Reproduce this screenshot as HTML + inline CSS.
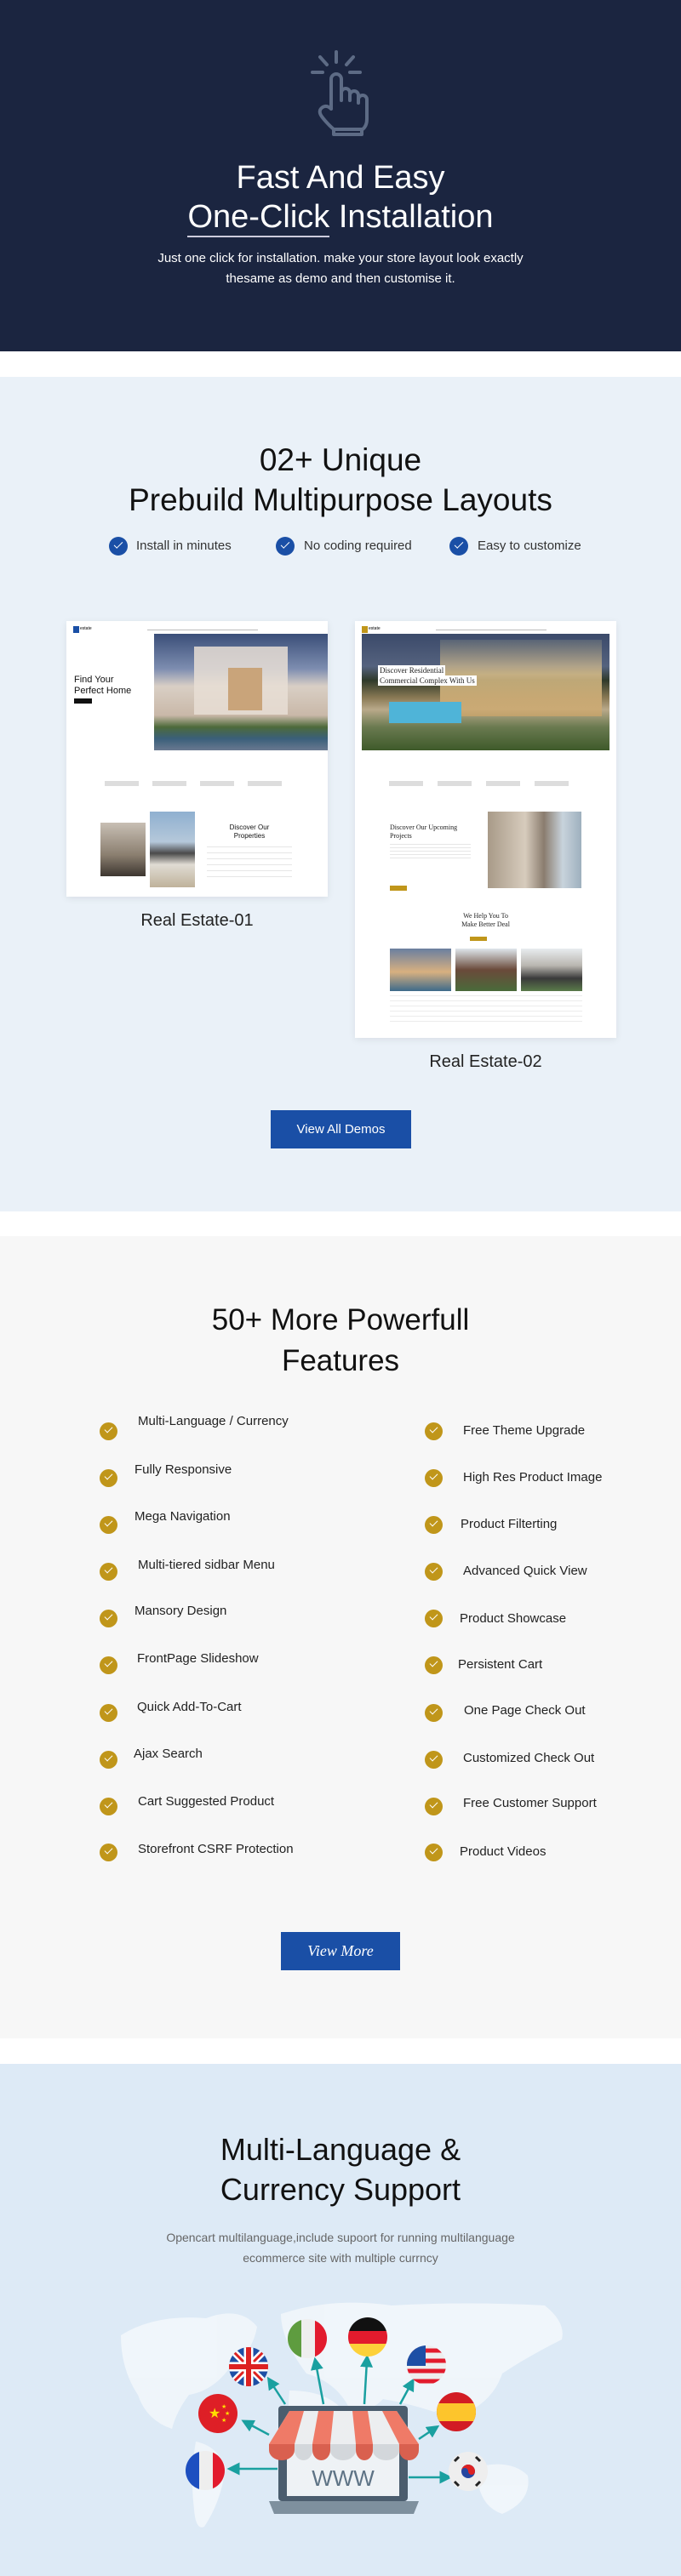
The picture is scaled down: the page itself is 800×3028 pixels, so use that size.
<!DOCTYPE html>
<html><head><meta charset="utf-8">
<style>
*{margin:0;padding:0;box-sizing:border-box}
body{width:800px;height:3028px;position:relative;background:#fff;font-family:"Liberation Sans",Arial,sans-serif;overflow:hidden}
.a{position:absolute}
.c{text-align:center;width:800px;left:0}
.h{color:#111;font-size:37px;line-height:47px}
.chk{position:absolute;width:21px;height:21px;border-radius:50%;background:#c0961a}
.chk:after{content:"";position:absolute;left:6px;top:5px;width:8px;height:4px;border-left:1.6px solid #fff;border-bottom:1.6px solid #fff;transform:rotate(-45deg)}
.bc{position:absolute;width:22px;height:22px;border-radius:50%;background:#1a4fa6}
.bc:after{content:"";position:absolute;left:6px;top:6px;width:9px;height:4px;border-left:1.6px solid #fff;border-bottom:1.6px solid #fff;transform:rotate(-45deg)}
.ft{position:absolute;font-size:15px;color:#222}
.card{position:absolute;background:#fff;box-shadow:0 2px 8px rgba(0,0,0,.08)}
.line{position:absolute;height:2px;background:#ccc}
</style></head><body>

<!-- Section 1 -->
<div class="a" style="left:0;top:0;width:800px;height:413px;background:#1b2540"></div>
<svg class="a" style="left:0;top:0" width="800" height="200">
<g stroke="#5d6b85" stroke-width="4" fill="none" stroke-linecap="round" stroke-linejoin="round">
<line x1="395" y1="61" x2="395" y2="73"/><line x1="376" y1="67" x2="384" y2="76"/><line x1="415" y1="67" x2="407" y2="76"/>
<line x1="367" y1="85" x2="379" y2="85"/><line x1="411" y1="85" x2="423" y2="85"/>
<path d="M389,128 V93 a6,6 0 0 1 12,0 V118 V109 a5,5 0 0 1 10,0 V118 V112 a5,5 0 0 1 10,0 V121 V117 a5,5 0 0 1 10,0 V140 q0,8 -5,12 H392 q-8,-7 -14,-15 q-5,-7 1,-11 q5,-3 10,2"/>
<path d="M392,152 V158 H425 V152"/>
</g></svg>
<div class="a c" style="top:186px;color:#fff;font-size:38px;line-height:46px">Fast And Easy<br><span style="display:inline-block;border-bottom:2px solid #ccd;line-height:40px;padding-bottom:2px">One-Click</span> Installation</div>
<div class="a c" style="top:292px;color:#fff;font-size:15px;line-height:24px">Just one click for installation. make your store layout look exactly<br>thesame as demo and then customise it.</div>

<!-- Section 2 -->
<div class="a" style="left:0;top:443px;width:800px;height:981px;background:#eaf1f8"></div>
<div class="a c h" style="top:517px">02+ Unique<br>Prebuild Multipurpose Layouts</div>
<div class="bc" style="left:128px;top:631px"></div><div class="a" style="left:160px;top:633px;font-size:15px;color:#333">Install in minutes</div>
<div class="bc" style="left:324px;top:631px"></div><div class="a" style="left:357px;top:633px;font-size:15px;color:#333">No coding required</div>
<div class="bc" style="left:528px;top:631px"></div><div class="a" style="left:561px;top:633px;font-size:15px;color:#333">Easy to customize</div>

<!-- card 1 -->
<div class="card" style="left:78px;top:730px;width:307px;height:324px">
 <div class="a" style="left:8px;top:6px;width:7px;height:8px;background:#1a4fa6"></div>
 <div class="a" style="left:16px;top:6px;font-size:5px">estate</div>
 <div class="line" style="left:95px;top:10px;width:130px;height:1px;background:#bbb"></div>
 <div class="a" style="left:103px;top:15px;width:204px;height:137px;background:linear-gradient(180deg,#3a4e78 0%,#7d8db0 30%,#d9cfc5 45%,#c9b8a8 70%,#4d6a3a 80%,#3a5f7a 90%,#6a7990 100%)"></div>
 <div class="a" style="left:150px;top:30px;width:110px;height:80px;background:#e8ded5;opacity:.85"></div>
 <div class="a" style="left:190px;top:55px;width:40px;height:50px;background:#c9a47a"></div>
 <div class="a" style="left:9px;top:63px;font-size:11px;line-height:13px;color:#111">Find Your<br>Perfect Home</div>
 <div class="a" style="left:9px;top:91px;width:21px;height:6px;background:#111"></div>
 <div class="line" style="left:45px;top:188px;width:220px;height:6px;background:repeating-linear-gradient(90deg,#ddd 0 40px,transparent 40px 56px)"></div>
 <div class="a" style="left:40px;top:237px;width:53px;height:63px;background:linear-gradient(180deg,#c8bfb4,#8b7f70 60%,#3d3630)"></div>
 <div class="a" style="left:98px;top:224px;width:53px;height:89px;background:linear-gradient(180deg,#8fb0d0 0%,#b5c8da 40%,#4a4a4a 55%,#e0dcd4 70%,#bfb29a 100%)"></div>
 <div class="a" style="left:170px;top:238px;width:90px;text-align:center;font-size:8px;line-height:10px;color:#111">Discover Our<br>Properties</div>
 <div class="line" style="left:165px;top:265px;width:100px;height:40px;background:repeating-linear-gradient(180deg,#e6e6e6 0 1px,transparent 1px 7px)"></div>
</div>
<div class="a" style="left:78px;top:1071px;width:307px;text-align:center;font-size:20px;color:#222">Real Estate-01</div>

<!-- card 2 -->
<div class="card" style="left:417px;top:730px;width:307px;height:490px">
 <div class="a" style="left:8px;top:6px;width:7px;height:8px;background:#c0961a"></div>
 <div class="a" style="left:16px;top:6px;font-size:5px">estate</div>
 <div class="line" style="left:95px;top:10px;width:130px;height:1px;background:#bbb"></div>
 <div class="a" style="left:8px;top:15px;width:291px;height:137px;background:linear-gradient(180deg,#3b4a6a 0%,#55627e 28%,#2f3a2a 40%,#8a7a55 55%,#b9a98a 65%,#6a7a50 80%,#3e5a2a 100%)"></div>
 <div class="a" style="left:100px;top:22px;width:190px;height:90px;background:linear-gradient(180deg,#5f6a78,#e6c890 45%,#caa46a);opacity:.8"></div>
 <div class="a" style="left:40px;top:95px;width:85px;height:25px;background:#4fb4d8"></div>
 <div class="a" style="left:27px;top:52px;font-family:'Liberation Serif',serif;font-size:9px;line-height:12px;color:#222;background:#fff;padding:0 2px">Discover Residential</div>
 <div class="a" style="left:27px;top:64px;font-family:'Liberation Serif',serif;font-size:9px;line-height:12px;color:#222;background:#fff;padding:0 2px">Commercial Complex With Us</div>
 <div class="line" style="left:40px;top:188px;width:225px;height:6px;background:repeating-linear-gradient(90deg,#ddd 0 40px,transparent 40px 57px)"></div>
 <div class="a" style="left:41px;top:238px;font-family:'Liberation Serif',serif;font-size:8px;line-height:10px;color:#222">Discover Our Upcoming<br>Projects</div>
 <div class="line" style="left:41px;top:262px;width:95px;height:20px;background:repeating-linear-gradient(180deg,#e6e6e6 0 1px,transparent 1px 4px)"></div>
 <div class="a" style="left:41px;top:311px;width:20px;height:6px;background:#c0961a"></div>
 <div class="a" style="left:156px;top:224px;width:110px;height:90px;background:linear-gradient(90deg,#a89a88 0%,#d7ccbd 40%,#8a7c6e 60%,#c8d3dc 80%,#9eb0be)"></div>
 <div class="a" style="left:0;top:342px;width:307px;text-align:center;font-family:'Liberation Serif',serif;font-size:8px;line-height:10px;color:#222">We Help You To<br>Make Better Deal</div>
 <div class="a" style="left:135px;top:371px;width:20px;height:5px;background:#c0961a"></div>
 <div class="a" style="left:41px;top:385px;width:72px;height:50px;background:linear-gradient(180deg,#6a7fa0,#d8b080 55%,#3d6a8a)"></div>
 <div class="a" style="left:118px;top:385px;width:72px;height:50px;background:linear-gradient(180deg,#dfe6ec,#6a4a3a 50%,#4a6a3a)"></div>
 <div class="a" style="left:195px;top:385px;width:72px;height:50px;background:linear-gradient(180deg,#e8ecef,#b9b6b0 40%,#3a3a3a 70%,#5a7a4a)"></div>
 <div class="line" style="left:41px;top:440px;width:226px;height:35px;background:repeating-linear-gradient(180deg,#ececec 0 1px,transparent 1px 6px)"></div>
</div>
<div class="a" style="left:417px;top:1237px;width:307px;text-align:center;font-size:20px;color:#222">Real Estate-02</div>

<div class="a" style="left:318px;top:1305px;width:165px;height:45px;background:#1a4fa6;color:#fff;font-size:15px;line-height:45px;text-align:center">View All Demos</div>

<!-- Section 3 -->
<div class="a" style="left:0;top:1453px;width:800px;height:943px;background:#f7f7f7"></div>
<div class="a c" style="top:1528px;font-size:35px;line-height:48px;color:#111">50+ More Powerfull<br>Features</div>

<div class="chk" style="left:117px;top:1672px"></div><div class="ft" style="left:162px;top:1662px">Multi-Language / Currency</div>
<div class="chk" style="left:117px;top:1727px"></div><div class="ft" style="left:158px;top:1719px">Fully Responsive</div>
<div class="chk" style="left:117px;top:1782px"></div><div class="ft" style="left:158px;top:1774px">Mega Navigation</div>
<div class="chk" style="left:117px;top:1837px"></div><div class="ft" style="left:162px;top:1831px">Multi-tiered sidbar Menu</div>
<div class="chk" style="left:117px;top:1892px"></div><div class="ft" style="left:158px;top:1885px">Mansory Design</div>
<div class="chk" style="left:117px;top:1947px"></div><div class="ft" style="left:161px;top:1941px">FrontPage Slideshow</div>
<div class="chk" style="left:117px;top:2003px"></div><div class="ft" style="left:161px;top:1998px">Quick Add-To-Cart</div>
<div class="chk" style="left:117px;top:2058px"></div><div class="ft" style="left:157px;top:2053px">Ajax Search</div>
<div class="chk" style="left:117px;top:2113px"></div><div class="ft" style="left:162px;top:2109px">Cart Suggested Product</div>
<div class="chk" style="left:117px;top:2167px"></div><div class="ft" style="left:162px;top:2165px">Storefront CSRF Protection</div>

<div class="chk" style="left:499px;top:1672px"></div><div class="ft" style="left:544px;top:1673px">Free Theme Upgrade</div>
<div class="chk" style="left:499px;top:1727px"></div><div class="ft" style="left:544px;top:1728px">High Res Product Image</div>
<div class="chk" style="left:499px;top:1782px"></div><div class="ft" style="left:541px;top:1783px">Product Filterting</div>
<div class="chk" style="left:499px;top:1837px"></div><div class="ft" style="left:544px;top:1838px">Advanced Quick View</div>
<div class="chk" style="left:499px;top:1892px"></div><div class="ft" style="left:540px;top:1894px">Product Showcase</div>
<div class="chk" style="left:499px;top:1947px"></div><div class="ft" style="left:538px;top:1948px">Persistent Cart</div>
<div class="chk" style="left:499px;top:2003px"></div><div class="ft" style="left:545px;top:2002px">One Page Check Out</div>
<div class="chk" style="left:499px;top:2058px"></div><div class="ft" style="left:544px;top:2058px">Customized Check Out</div>
<div class="chk" style="left:499px;top:2113px"></div><div class="ft" style="left:544px;top:2111px">Free Customer Support</div>
<div class="chk" style="left:499px;top:2167px"></div><div class="ft" style="left:540px;top:2168px">Product Videos</div>

<div class="a" style="left:330px;top:2271px;width:140px;height:45px;background:#1a4fa6;color:#fff;font-family:'Liberation Serif',serif;font-style:italic;font-size:18px;line-height:45px;text-align:center">View More</div>

<!-- Section 4 -->
<div class="a" style="left:0;top:2426px;width:800px;height:602px;background:#ddeaf6"></div>
<div class="a c h" style="top:2503px;font-size:36px">Multi-Language &amp;<br>Currency Support</div>
<div class="a c" style="top:2618px;font-size:14px;line-height:24px;color:#666">Opencart multilanguage,include supoort for running multilanguage<br>ecommerce site with multiple currncy</div>

<svg class="a" style="left:0;top:2690px" width="800" height="300" viewBox="0 2690 800 300">
<defs>
<clipPath id="c1"><circle cx="0" cy="0" r="23"/></clipPath>
<marker id="ar" markerWidth="6" markerHeight="6" refX="3" refY="3" orient="auto"><path d="M0,0 L6,3 L0,6Z" fill="#1aa0a0"/></marker>
</defs>
<g fill="#fff" opacity=".55">
<path d="M142,2745 q40,-25 100,-20 q40,-15 60,10 q-5,30 -30,45 q-20,30 -50,35 q-15,20 -20,40 q-30,-10 -40,-40 q-20,-30 -20,-70Z"/>
<path d="M230,2870 q25,5 35,30 q-5,40 -25,70 q-10,5 -12,-20 q-5,-40 2,-80Z"/>
<path d="M330,2720 q60,-20 130,-10 q90,-5 180,0 q25,20 20,40 q-40,20 -70,40 q-10,30 -40,45 q-20,-10 -40,0 q-30,-10 -60,-15 q-20,20 -40,10 q-15,-30 -50,-40 q-30,-40 -30,-70Z"/>
<path d="M340,2810 q40,0 60,20 q10,40 -10,80 q-20,10 -35,-10 q-20,-40 -15,-90Z"/>
<path d="M560,2900 q40,-10 60,10 q5,30 -30,45 q-30,-10 -30,-55Z"/>
</g>
<g stroke="#1aa0a0" stroke-width="2.5" marker-end="url(#ar)">
<line x1="335" y1="2826" x2="318" y2="2800"/><line x1="380" y1="2826" x2="371" y2="2778"/>
<line x1="428" y1="2826" x2="431" y2="2775"/><line x1="470" y1="2826" x2="483" y2="2802"/>
<line x1="316" y1="2862" x2="290" y2="2848"/><line x1="492" y1="2867" x2="510" y2="2855"/>
<line x1="326" y1="2902" x2="274" y2="2902"/><line x1="480" y1="2912" x2="524" y2="2912"/>
</g>
<rect x="327" y="2828" width="152" height="112" rx="4" fill="#4b5d6e"/>
<rect x="337" y="2858" width="132" height="76" fill="#eef2f5"/>
<text x="403" y="2922" text-anchor="middle" font-family="Liberation Sans" font-size="26" fill="#5e7385">WWW</text>
<path d="M316,2940 H492 L486,2955 H322Z" fill="#7e909e"/>
<g>
<path d="M340,2834 H466 L492,2873 H316Z" fill="#eceef0"/>
<path d="M340,2834 H357 L346,2873 H316Z M374,2834 H392 L388,2873 H367Z M414,2834 H432 L438,2873 H418Z M449,2834 H466 L492,2873 H469Z" fill="#ef7a67"/>
<path d="M316,2873 H346 V2880 a15,12 0 0 1 -30,0Z M367,2873 H388 V2880 a10.5,12 0 0 1 -21,0Z M418,2873 H438 V2880 a10,12 0 0 1 -20,0Z M469,2873 H492 V2880 a11.5,12 0 0 1 -23,0Z" fill="#d9604f"/>
<path d="M346,2873 H367 V2880 a10.5,12 0 0 1 -21,0Z M388,2873 H418 V2880 a15,12 0 0 1 -30,0Z M438,2873 H469 V2880 a15.5,12 0 0 1 -31,0Z" fill="#d3d7db"/>
</g>
<!-- flags -->
<g transform="translate(292,2782)"><g clip-path="url(#c1)"><rect x="-23" y="-23" width="46" height="46" fill="#1d4fa5"/><path d="M-23,-23 L23,23 M23,-23 L-23,23" stroke="#fff" stroke-width="8"/><path d="M-23,-23 L23,23 M23,-23 L-23,23" stroke="#d22" stroke-width="3"/><path d="M0,-23V23M-23,0H23" stroke="#fff" stroke-width="11"/><path d="M0,-23V23M-23,0H23" stroke="#d22" stroke-width="6"/></g></g>
<g transform="translate(361,2749)"><g clip-path="url(#c1)"><rect x="-23" y="-23" width="16" height="46" fill="#5e9c3f"/><rect x="-7" y="-23" width="16" height="46" fill="#eee"/><rect x="9" y="-23" width="16" height="46" fill="#e21b2d"/></g></g>
<g transform="translate(432,2747)"><g clip-path="url(#c1)"><rect x="-23" y="-23" width="46" height="16" fill="#111"/><rect x="-23" y="-7" width="46" height="15" fill="#e21b2d"/><rect x="-23" y="8" width="46" height="16" fill="#fdd13a"/></g></g>
<g transform="translate(501,2780)"><g clip-path="url(#c1)"><rect x="-23" y="-23" width="46" height="46" fill="#eee"/><path d="M-23,-17H23M-23,-5H23M-23,7H23M-23,19H23" stroke="#e21b2d" stroke-width="5"/><rect x="-23" y="-23" width="22" height="24" fill="#1d4fa5"/></g></g>
<g transform="translate(256,2837)"><g clip-path="url(#c1)"><rect x="-23" y="-23" width="46" height="46" fill="#de1f26"/></g><text x="-11" y="5" font-size="16" fill="#fd0" font-family="DejaVu Sans">★</text><text x="4" y="-6" font-size="7" fill="#fd0" font-family="DejaVu Sans">★</text><text x="8" y="2" font-size="7" fill="#fd0" font-family="DejaVu Sans">★</text><text x="4" y="10" font-size="7" fill="#fd0" font-family="DejaVu Sans">★</text></g>
<g transform="translate(536,2835)"><g clip-path="url(#c1)"><rect x="-23" y="-23" width="46" height="46" fill="#d21c24"/><rect x="-23" y="-10" width="46" height="21" fill="#fdc52c"/></g></g>
<g transform="translate(241,2904)"><g clip-path="url(#c1)"><rect x="-23" y="-23" width="16" height="46" fill="#1d4fc0"/><rect x="-7" y="-23" width="16" height="46" fill="#eee"/><rect x="9" y="-23" width="16" height="46" fill="#e21b2d"/></g></g>
<g transform="translate(550,2905)"><g clip-path="url(#c1)"><rect x="-23" y="-23" width="46" height="46" fill="#eee"/></g><circle r="8" fill="#2546a0"/><path d="M-8,0 a8,8 0 0 1 16,0 a4,4 0 0 1 -8,0 a4,4 0 0 0 -8,0Z" fill="#d22"/><path d="M-16,-12 l5,-5 M14,-12 l-5,-5 M-16,12 l5,5 M14,12 l-5,5" stroke="#222" stroke-width="3"/></g>
</svg>
</body></html>
